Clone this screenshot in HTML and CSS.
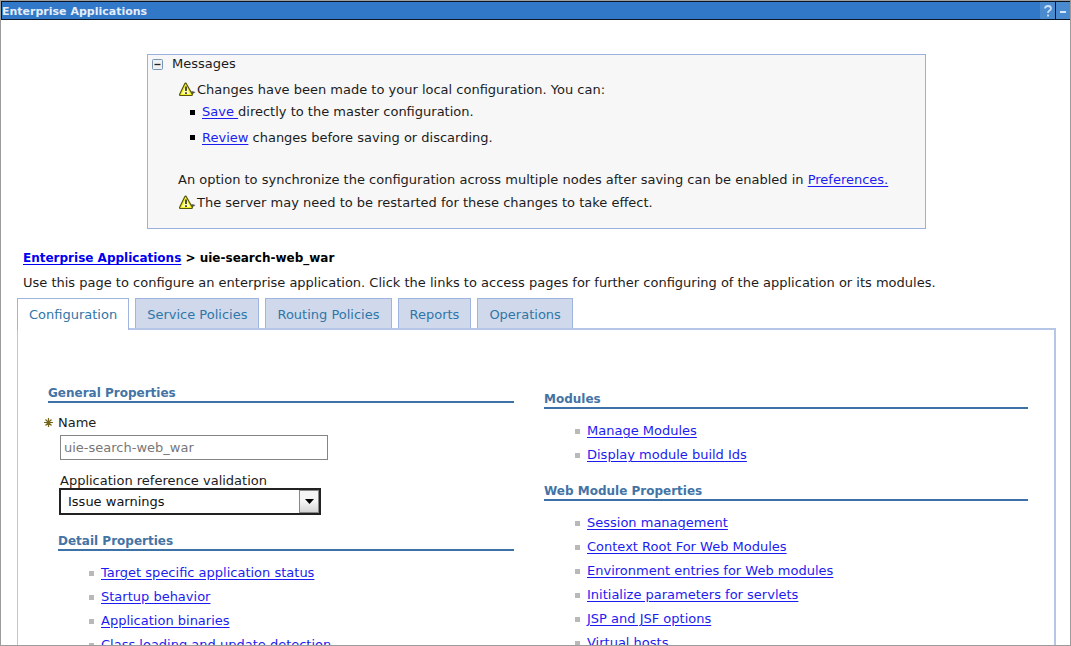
FILE: index.html
```html
<!DOCTYPE html>
<html lang="en">
<head>
<meta charset="utf-8">
<title>Enterprise Applications</title>
<link rel="stylesheet" href="styles.css">
</head>
<body>
<svg class="defs" aria-hidden="true">
  <symbol id="warn" viewBox="0 0 18 16">
    <path d="M13 9l4 1-4 3z" fill="#555"/>
    <path d="M7.500 1.200L13.800 12.200Q14 13.500 12.800 13.500H2Q.8 13.500 1.200 12.200L6 2.200Q6.700 1 7.500 1.200z" fill="#f4f024" stroke="#55550c" stroke-width="1.200"/>
    <path d="M7.500 3.500L11.500 12H3.500z" fill="#ffffb0"/>
    <path d="M7.500 4.500V9M7.500 10.300V12" stroke="#222" stroke-width="1.600"/>
  </symbol>
</svg>
<div class="frame">
  <header class="titlebar">
    <h1 class="titlebar-text">Enterprise Applications</h1>
    <button class="title-btn" type="button" aria-label="Help"><svg width="10" height="14" viewBox="0 0 10 14"><path d="M2 4.500Q2 2 5 2T8 4.500Q8 6 6.300 6.800Q5 7.500 5 9M5 10.500V12.500" fill="none" stroke="#c9e0f6" stroke-width="1.800"/></svg></button>
    <button class="title-btn title-btn-min" type="button" aria-label="Minimize"><svg width="8" height="14" viewBox="0 0 8 14"><path d="M1 8H7" stroke="#d5e7f8" stroke-width="2"/></svg></button>
  </header>

  <section class="messages">
    <div class="messages-head">
      <button class="collapse" type="button" aria-label="Collapse messages"><svg width="11" height="11" viewBox="0 0 11 11"><rect x=".5" y=".5" width="10" height="10" rx="1" fill="#eef0f2" stroke="#7795b5"/><path d="M2.500 5.500H8.500" stroke="#222" stroke-width="1.300"/></svg></button>
      <h2 class="messages-title">Messages</h2>
    </div>
    <div class="messages-body">
      <p class="msg"><svg class="warn"><use href="#warn"/></svg>Changes have been made to your local configuration. You can:</p>
      <ul class="choices">
        <li><a href="#save">Save </a>directly to the master configuration.</li>
        <li><a href="#review">Review</a> changes before saving or discarding.</li>
      </ul>
      <p class="msg">An option to synchronize the configuration across multiple nodes after saving can be enabled in&nbsp;<a href="#preferences">Preferences.</a></p>
      <p class="msg"><svg class="warn"><use href="#warn"/></svg>The server may need to be restarted for these changes to take effect.</p>
    </div>
  </section>

  <nav class="crumbs"><a href="#apps">Enterprise Applications</a> &gt; uie-search-web_war</nav>
  <p class="intro">Use this page to configure an enterprise application. Click the links to access pages for further configuring of the application or its modules.</p>

  <nav class="tabs">
    <a class="tab tab-active" href="#configuration">Configuration</a>
    <a class="tab" href="#service">Service Policies</a>
    <a class="tab" href="#routing">Routing Policies</a>
    <a class="tab" href="#reports">Reports</a>
    <a class="tab" href="#operations">Operations</a>
  </nav>

  <main class="panel">
    <div class="column">
      <h2 class="heading">General Properties</h2>
      <div class="fields">
        <label class="label required" for="name"><svg class="star" width="9" height="9" viewBox="0 0 9 9"><path d="M4.500 0V9M0 4.500H9M1.500 1.500L7.500 7.500M7.500 1.500L1.500 7.500" stroke="#75651c" stroke-width="1.200"/></svg>Name</label>
        <input class="text" id="name" type="text" value="uie-search-web_war" readonly>
        <label class="label" for="validation">Application reference validation</label>
        <div class="select-wrap">
          <select class="select" id="validation"><option>Issue warnings</option></select>
          <span class="arrow"><svg width="9" height="5" viewBox="0 0 9 5"><path d="M0 0H9L4.500 5z" fill="#000"/></svg></span>
        </div>
      </div>
      <section class="detail">
        <h2 class="heading">Detail Properties</h2>
        <ul class="links">
          <li><a href="#status">Target specific application status</a></li>
          <li><a href="#startup">Startup behavior</a></li>
          <li><a href="#binaries">Application binaries</a></li>
          <li><a href="#loading">Class loading and update detection</a></li>
        </ul>
      </section>
    </div>
    <div class="column column-right">
      <section>
        <h2 class="heading">Modules</h2>
        <ul class="links">
          <li><a href="#manage">Manage Modules</a></li>
          <li><a href="#build">Display module build Ids</a></li>
        </ul>
      </section>
      <section>
        <h2 class="heading">Web Module Properties</h2>
        <ul class="links">
          <li><a href="#session">Session management</a></li>
          <li><a href="#context">Context Root For Web Modules</a></li>
          <li><a href="#environment">Environment entries for Web modules</a></li>
          <li><a href="#parameters">Initialize parameters for servlets</a></li>
          <li><a href="#jsp">JSP and JSF options</a></li>
          <li><a href="#hosts">Virtual hosts</a></li>
        </ul>
      </section>
    </div>
  </main>
</div>
</body>
</html>
```
FILE: styles.css
```css
* { box-sizing: border-box; }
body {
  margin: 0;
  font-family: "DejaVu Sans", Verdana, sans-serif;
  font-size: 13px;
  line-height: 16px;
  color: #1c1c1c;
  background: #fff;
}
h1, h2, p, ul { margin: 0; padding: 0; font-size: 13px; }
ul { list-style: none; }
button { padding: 0; border: 0; background: none; }
a { color: #1c1cf0; text-underline-offset: 2px; }
.defs { position: absolute; width: 0; height: 0; }

.frame {
  display: flex;
  flex-direction: column;
  height: 100vh;
  overflow: hidden;
  border: 1px solid #9c9c9c;
}

.titlebar {
  display: flex;
  flex: none;
  height: 19px;
  border: solid #0a1626;
  border-width: 1px 0 1px 1px;
  background: #3178c8;
}
.titlebar-text {
  flex: 1;
  font-size: 11px;
  line-height: 19px;
  color: #e4eefa;
}
.title-btn {
  display: flex;
  align-items: center;
  justify-content: center;
  width: 15px;
  background: #4a8bd0;
}
.title-btn-min { border-left: 1px solid #0a1626; }

.messages {
  flex: none;
  margin: 34px 144px 0 146px;
  padding: 1px 4px 14px;
  border: 1px solid #9ab1de;
  background: #f7f7f7;
}
.messages-head { display: flex; align-items: center; gap: 9px; }
.collapse { display: flex; }
.messages-title { font-weight: normal; }
.messages-body { padding: 6px 0 0 26px; }
.msg { display: flex; align-items: center; height: 23px; white-space: nowrap; }
.warn { flex: none; width: 19px; height: 16px; }
.choices { padding: 0 0 17px 12px; }
.choices li { display: flex; align-items: center; height: 27px; white-space: pre; }
.choices li:first-child { height: 22px; margin-bottom: 1px; }
.choices li::before { content: ""; width: 5px; height: 5px; margin-right: 7px; background: #000; }

.crumbs { flex: none; margin: 20px 22px 0; font-size: 12px; font-weight: bold; line-height: 18px; color: #000; }
.crumbs a { color: #0000f0; }
.intro { flex: none; margin: 8px 22px 7px; white-space: nowrap; }

.tabs {
  display: flex;
  flex: none;
  gap: 6px;
  margin: 0 14px 0 16px;
  position: relative;
}
.tab {
  height: 30px;
  padding: 0 11px;
  border: 1px solid #9fb5e0;
  border-bottom: 0;
  line-height: 31px;
  color: #2f76a8;
  background: #d0d9eb;
  text-decoration: none;
  white-space: nowrap;
}
.tab-active { height: 32px; margin-bottom: -2px; background: #fff; }

.panel {
  display: grid;
  grid-template-columns: 466px 1fr;
  gap: 30px;
  flex: 1;
  margin: 0 14px 0 16px;
  padding: 56px 26px 0 30px;
  border: solid #b6c6e7;
  border-width: 2px 2px 0 1px;
}
.column-right { padding-top: 6px; }
.heading {
  border-bottom: 2px solid #3d71a8;
  font-size: 12px;
  line-height: 15px;
  color: #4473a5;
}
.fields { display: flex; flex-direction: column; align-items: flex-start; padding: 12px 0 0 12px; }
.label { display: block; line-height: 15px; }
.required { display: flex; align-items: center; gap: 5px; margin-left: -16px; }
.text {
  width: 268px;
  height: 25px;
  margin: 5px 0 13px;
  padding: 0 3px;
  border: 1px solid #858585;
  font: inherit;
  color: #777;
}
.select-wrap { position: relative; width: 262px; margin-left: -1px; }
.select {
  display: block;
  width: 100%;
  height: 27px;
  padding: 0 7px;
  border: 2px solid #222;
  border-radius: 0;
  appearance: none;
  font: inherit;
  color: #111;
  background: #fff;
}
.arrow {
  display: flex;
  align-items: center;
  justify-content: center;
  position: absolute;
  top: 2px;
  right: 2px;
  bottom: 2px;
  width: 20px;
  border: 1px solid #888;
  background: linear-gradient(#f4f4f4 50%, #d5d5d5);
  pointer-events: none;
}
.detail { padding: 19px 0 0 10px; }
.links { padding: 10px 0 17px 31px; }
.links li { display: flex; align-items: center; height: 24px; white-space: nowrap; }
.links li::before { content: ""; width: 5px; height: 5px; margin-right: 7px; background: #b9b9b9; }
```
